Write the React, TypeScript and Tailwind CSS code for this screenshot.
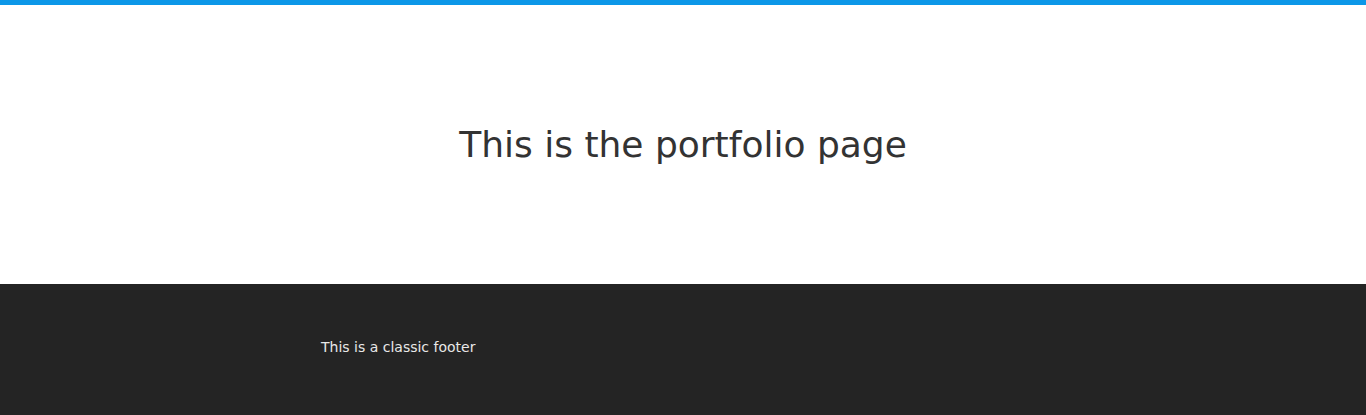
export default function App() {
  return (
    <div className="min-h-screen flex flex-col font-['DejaVu_Sans',sans-serif]">
      <div className="h-[5px] bg-[#0c97e8]" />
      <main className="h-[279px] flex items-center justify-center bg-white">
        <h1 className="text-[36px] leading-none text-[#333333]">This is the portfolio page</h1>
      </main>
      <footer className="flex-1 bg-[#242424] pt-[54px] pb-[50px]">
        <div className="w-[724px] mx-auto">
          <p className="text-[14px] leading-[18px] text-[#e8e8e8]">This is a classic footer</p>
        </div>
      </footer>
    </div>
  );
}
